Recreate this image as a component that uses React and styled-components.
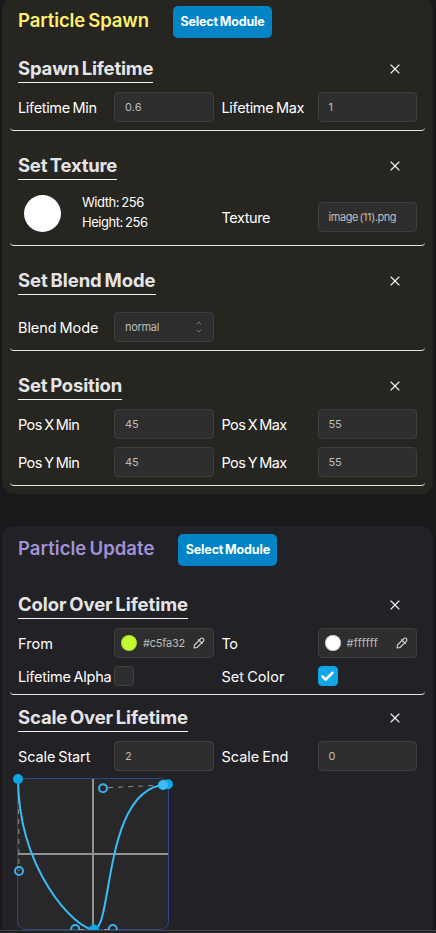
import React from 'react';
import styled, { createGlobalStyle } from 'styled-components';
import { X, Check, ChevronUp, ChevronDown } from 'lucide-react';

const GlobalStyle = createGlobalStyle`
  *, *::before, *::after { box-sizing: border-box; }
  body { margin: 0; background: #19191b; overflow: hidden; }
`;

const Shell = styled.div`
  display: flex;
  flex-direction: column;
  height: 933px;
  color: #fff;
  font-family: Inter, "Noto Sans", sans-serif;
`;

const Scroller = styled.main`
  flex: 1;
  min-height: 0;
  overflow: hidden;
  padding: 0 3px 0 2px;
`;

const Footer = styled.footer`
  height: 3px;
  flex: none;
  background: #222224;
  border-top: 1px solid #434248;
`;

const Panel = styled.section`
  margin-top: ${(p) => p.$offset}px;
  padding: 8px;
  border-radius: 12px;
  background: ${(p) => p.$background};
`;

const PanelHeader = styled.header`
  display: flex;
  align-items: center;
  height: 32px;
  padding-left: 8px;
  gap: 24px;
  margin-bottom: ${(p) => p.$space}px;
`;

const PanelTitle = styled.h2`
  margin: -4px 0 0;
  font-size: 18.5px;
  line-height: 28px;
  font-weight: 600;
  word-spacing: -1.5px;
  letter-spacing: ${(p) => p.$track}px;
  white-space: nowrap;
  color: ${(p) => p.$color};
`;

const SelectButton = styled.button`
  width: 99px;
  height: 32px;
  padding: 0 0 1px;
  border: 0;
  border-radius: 5px;
  background: #0284c7;
  color: #fff;
  font: 700 12.5px Inter, sans-serif;
  letter-spacing: -0.15px;
  word-spacing: -1px;
  white-space: nowrap;
`;

const ModuleBox = styled.article`
  margin-top: ${(p) => p.$space || 0}px;
  padding: 0 8px 8px;
  border-bottom: 1px solid #e4e4e7;
  border-radius: 4px;
`;

const ModuleHeader = styled.div`
  display: flex;
  align-items: center;
  justify-content: space-between;
  height: 28px;
`;

const ModuleTitle = styled.h3`
  margin: 0;
  height: 28px;
  border-bottom: 1px solid #f4f4f5;
  color: #e4e4e7;
  font-size: 18.5px;
  line-height: 27px;
  font-weight: 700;
  word-spacing: -1.5px;
  letter-spacing: ${(p) => p.$track - 0.1}px;
  white-space: nowrap;
`;

const CloseButton = styled.button`
  display: grid;
  place-items: center;
  width: 28px;
  height: 28px;
  margin-right: 8px;
  padding: 0;
  border: 0;
  background: none;
  color: #f4f4f5;
`;

const Fields = styled.div`
  display: grid;
  grid-template-columns: 1fr 1fr;
  gap: 8px;
  padding-top: ${(p) => p.$space || 9}px;
`;

const FieldCell = styled.div`
  display: flex;
  align-items: center;
  min-width: 0;
  padding-top: ${(p) => p.$drop || 0}px;
`;

const Label = styled.label`
  flex: none;
  width: 96px;
  padding-top: 2px;
  font-size: 14.5px;
  line-height: 18px;
  word-spacing: -1px;
  letter-spacing: ${(p) => p.$track - 0.07}px;
  white-space: nowrap;
`;

const Control = styled.div`
  display: flex;
  align-items: center;
  flex: 1;
  min-width: 0;
  height: 30px;
  padding: 0 ${(p) => (p.$swatch ? 8 : 10)}px 0 ${(p) => (p.$swatch ? 6 : 10)}px;
  border: 1px solid #3e3e3e;
  border-radius: 4px;
  background: #2e2e2e;
  color: #bdbdbd;
  font-size: 11px;
  word-spacing: -1px;
  letter-spacing: ${(p) => p.$track || 0}px;
  white-space: nowrap;
`;

const Swatch = styled.span`
  width: 16px;
  height: 16px;
  margin-right: 6px;
  border-radius: 50%;
  background: ${(p) => p.$color};
  box-shadow: inset 0 0 2px rgba(0, 0, 0, 0.35);
`;

const Trailing = styled.span`
  display: flex;
  flex-direction: column;
  align-items: center;
  margin-left: auto;
  color: ${(p) => p.$color};
`;

const Checkbox = styled.span`
  display: grid;
  place-items: center;
  width: 20px;
  height: 20px;
  border: 1px solid ${(p) => (p.$checked ? '#0ea5e9' : '#424242')};
  border-radius: 4px;
  background: ${(p) => (p.$checked ? '#0ea5e9' : '#2e2e2e')};
`;

const Preview = styled.div`
  display: flex;
  align-items: center;
  height: 48px;
`;

const Texture = styled.span`
  width: 37px;
  height: 37px;
  margin: 0 21.5px 0 5.5px;
  border-radius: 50%;
  background: #fff;
`;

const Meta = styled.div`
  margin-top: -2px;
  font-size: 13px;
  line-height: 20px;
  word-spacing: -1px;
  letter-spacing: -0.45px;
  white-space: nowrap;
`;

const Curve = styled.svg`
  display: block;
  width: 160px;
  height: 160px;
  margin: 2px 0 0 -5px;
`;

function Module({ title, track, space, children }) {
  return (
    <ModuleBox $space={space}>
      <ModuleHeader>
        <ModuleTitle $track={track}>{title}</ModuleTitle>
        <CloseButton aria-label={`Remove ${title}`}>
          <X size={16} strokeWidth={1.7} />
        </CloseButton>
      </ModuleHeader>
      {children}
    </ModuleBox>
  );
}

function Field({ label, track, drop, children }) {
  return (
    <FieldCell $drop={drop}>
      <Label $track={track}>{label}</Label>
      {children}
    </FieldCell>
  );
}

function Dropper() {
  return (
    <svg width="12" height="12" viewBox="0 0 12 12" fill="none" stroke="currentColor" strokeWidth="1.1" strokeLinejoin="round" strokeLinecap="round">
      <path d="M1 11 1.5 8 7.8 1.6a1.8 1.8 0 0 1 2.6 0 1.8 1.8 0 0 1 0 2.6L4 10.5ZM5.6 2.7l3.7 3.7" />
    </svg>
  );
}

function ColorControl({ value, track }) {
  return (
    <Control $swatch $track={track}>
      <Swatch $color={value} />
      {value}
      <Trailing $color="#d4d4d4"><Dropper /></Trailing>
    </Control>
  );
}

function LifetimeCurve() {
  return (
    <Curve viewBox="13 773 160 160" fill="none">
      <rect x="17.5" y="778.5" width="151" height="151" rx="8" fill="#28282a" stroke="#2b4a86" />
      <path d="M93 779v150M18 854h150" stroke="#929293" strokeWidth="2" />
      <path d="M18.5 779 19 871M163 785 103 788M94 929.5H75M94 929.5h19" stroke="#8d8d8d" strokeDasharray="5 5" />
      <path d="M18 779C19 871 75 929 94 929.5C113 929 103 788 166 784.5" stroke="#38bdf8" strokeWidth="2" />
      <g fill="#0ea5e9">
        <circle cx="18" cy="779" r="5" />
        <circle cx="94" cy="929.5" r="5" />
        <circle cx="168" cy="784.3" r="5" />
      </g>
      <circle cx="163" cy="785" r="5" fill="#38bdf8" />
      <g stroke="#38b2ef" strokeWidth="2">
        <circle cx="19" cy="871" r="4" />
        <circle cx="103" cy="788.2" r="4" />
        <circle cx="75.2" cy="929" r="4" />
        <circle cx="112.8" cy="929" r="4" />
      </g>
    </Curve>
  );
}

export default function App() {
  return (
    <Shell>
      <GlobalStyle />
      <Scroller>
        <Panel $offset={-2} $background="#262520">
          <PanelHeader $space={17}>
            <PanelTitle $color="#fef06e" $track={-0.1}>Particle Spawn</PanelTitle>
            <SelectButton>Select Module</SelectButton>
          </PanelHeader>
          <Module title="Spawn Lifetime" track={-0.09}>
            <Fields>
              <Field label="Lifetime Min" track={-0.27}><Control $track={0.1}>0.6</Control></Field>
              <Field label="Lifetime Max" track={-0.27}><Control>1</Control></Field>
            </Fields>
          </Module>
          <Module title="Set Texture" track={-0.14} space={21}>
            <Fields>
              <Preview>
                <Texture />
                <Meta>Width: 256<br />Height: 256</Meta>
              </Preview>
              <Field label="Texture" track={-0.37} drop={8}><Control $track={-0.45}>image (11).png</Control></Field>
            </Fields>
          </Module>
          <Module title="Set Blend Mode" track={0.04} space={21}>
            <Fields $space={17}>
              <Field label="Blend Mode" track={0}>
                <Control $track={-0.3}>
                  normal
                  <Trailing $color="#777">
                    <ChevronUp size={8} strokeWidth={3} />
                    <ChevronDown size={8} strokeWidth={3} />
                  </Trailing>
                </Control>
              </Field>
            </Fields>
          </Module>
          <Module title="Set Position" track={-0.06} space={21}>
            <Fields>
              <Field label="Pos X Min" track={-0.55}><Control $track={-0.2}>45</Control></Field>
              <Field label="Pos X Max" track={-0.55}><Control $track={-0.2}>55</Control></Field>
              <Field label="Pos Y Min" track={-0.55}><Control $track={-0.2}>45</Control></Field>
              <Field label="Pos Y Max" track={-0.55}><Control $track={-0.2}>55</Control></Field>
            </Fields>
          </Module>
        </Panel>
        <Panel $offset={32} $background="#222126">
          <PanelHeader $space={25}>
            <PanelTitle $color="#a093d6" $track={0.04}>Particle Update</PanelTitle>
            <SelectButton>Select Module</SelectButton>
          </PanelHeader>
          <Module title="Color Over Lifetime" track={0.02}>
            <Fields>
              <Field label="From" track={0.1}><ColorControl value="#c5fa32" track={-0.2} /></Field>
              <Field label="To" track={-0.3}><ColorControl value="#ffffff" track={0.35} /></Field>
              <Field label="Lifetime Alpha" track={-0.16}><Checkbox /></Field>
              <Field label="Set Color" track={0.11}>
                <Checkbox $checked><Check size={15} strokeWidth={4} /></Checkbox>
              </Field>
            </Fields>
          </Module>
          <Module title="Scale Over Lifetime" track={-0.04} space={9}>
            <Fields>
              <Field label="Scale Start" track={-0.05}><Control>2</Control></Field>
              <Field label="Scale End" track={0.05}><Control>0</Control></Field>
            </Fields>
            <LifetimeCurve />
          </Module>
        </Panel>
      </Scroller>
      <Footer />
    </Shell>
  );
}
